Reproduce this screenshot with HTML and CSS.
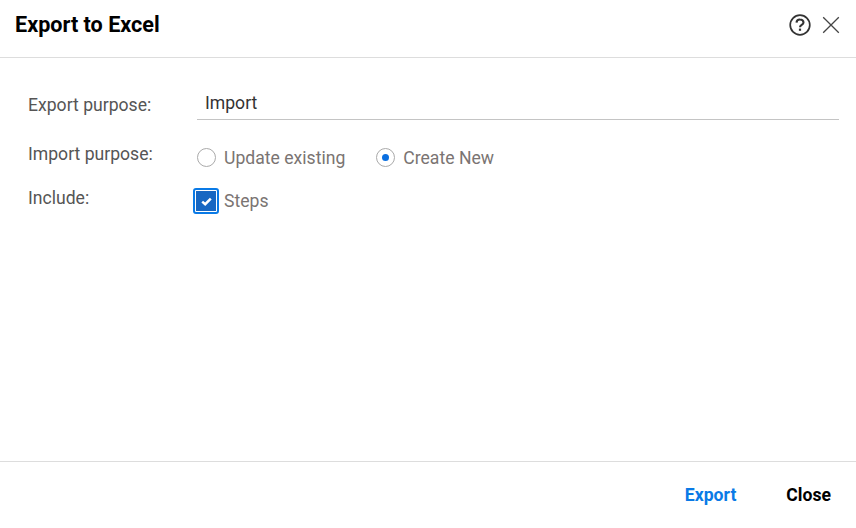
FILE: index.html
```html
<!DOCTYPE html>
<html lang="en">
<head>
<meta charset="utf-8">
<title>Export to Excel</title>
<link rel="stylesheet" href="styles.css">
</head>
<body>
<div class="dialog">
  <header class="header">
    <h1 class="title">Export to Excel</h1>
    <div class="header-icons">
      <svg class="icon-help" width="22" height="22" viewBox="0 0 22 22" aria-label="Help">
        <circle cx="11" cy="11" r="9.8" fill="none" stroke="#333" stroke-width="1.7"/>
        <path d="M7.5 8.6a3.4 3.4 0 0 1 3.5-3.1c2 0 3.5 1.2 3.5 2.9 0 2.5-3.5 2.5-3.5 4.8" fill="none" stroke="#333" stroke-width="2.1"/>
        <rect x="9.9" y="14.6" width="2.2" height="2.2" fill="#333"/>
      </svg>
      <svg class="icon-close" width="18" height="18" viewBox="0 0 18 18" aria-label="Close">
        <path d="M1.2 1.2 16.8 16.8M16.8 1.2 1.2 16.8" fill="none" stroke="#444" stroke-width="1.3"/>
      </svg>
    </div>
  </header>
  <main class="content">
    <div class="row row-purpose">
      <span class="label">Export purpose:</span>
      <div class="input">Import</div>
    </div>
    <div class="row row-import">
      <span class="label">Import purpose:</span>
      <div class="options">
        <span class="option"><span class="radio"></span>Update existing</span>
        <span class="option"><span class="radio radio-on"></span>Create New</span>
      </div>
    </div>
    <div class="row row-include">
      <span class="label">Include:</span>
      <span class="option option-check">
        <span class="check">
          <svg width="11" height="9" viewBox="0 0 11 9"><path d="M1.2 4.6 4.2 7.2 9.8 1.6" fill="none" stroke="#fff" stroke-width="2.5"/></svg>
        </span>Steps
      </span>
    </div>
  </main>
  <footer class="footer">
    <button class="btn btn-primary">Export</button>
    <button class="btn">Close</button>
  </footer>
</div>
</body>
</html>
```
FILE: styles.css
```css
* { box-sizing: border-box; }
html, body { margin: 0; height: 100%; }
body { background: #fff; font-family: Roboto, "Liberation Sans", sans-serif; }
.dialog { width: 856px; height: 528px; display: flex; flex-direction: column; }
.header {
  height: 58px; flex: none; display: flex; align-items: center; justify-content: space-between;
  padding: 0 16px 8px 15px; border-bottom: 1px solid #ddd;
}
.title { margin: 0; font-size: 21.6px; font-weight: 700; color: #000; line-height: 28px; }
.header-icons { display: flex; align-items: center; gap: 11px; }
.icon-help, .icon-close { display: block; }
.content { flex: 1; padding: 30px 17px 0 28px; }
.row { display: flex; }
.label { width: 169px; flex: none; font-size: 17.6px; line-height: 20px; color: #555; }
.row-purpose { height: 32px; }
.row-purpose .label { padding-top: 7px; }
.input {
  flex: 1; height: 32px; padding: 0 8px; font-size: 17.6px; line-height: 31px; color: #333;
  border-bottom: 1px solid #c4c4c4;
}
.row-import { margin-top: 24px; height: 24px; }
.row-include { margin-top: 20px; height: 24px; }
.options { display: flex; gap: 31px; padding-top: 3px; }
.option { display: flex; align-items: center; font-size: 17.6px; line-height: 24px; color: #7a7472; }
.radio {
  width: 19px; height: 19px; border-radius: 50%; border: 1px solid #aaa; margin-right: 8px; background: #fff; position: relative;
}
.radio-on::after {
  content: ""; position: absolute; left: 5px; top: 5px; width: 7px; height: 7px; border-radius: 50%; background: #0a6fe0;
}
.option-check { margin-left: -4px; height: 26px; }
.check {
  width: 26px; height: 26px; margin-right: 5px; border: 2px solid #0a7ae6; border-radius: 3px; padding: 1px;
  display: flex; align-items: center; justify-content: center; background-clip: content-box; background-color: #1767c2;
}
.footer {
  height: 67px; flex: none; border-top: 1px solid #ddd; display: flex; justify-content: flex-end; align-items: center;
  gap: 50px; padding: 0 25px 0 0;
}
.btn { border: 0; background: none; padding: 0; font: 700 17.6px/24px Roboto, "Liberation Sans", sans-serif; color: #000; }
.btn-primary { color: #0a7ae6; }
```
